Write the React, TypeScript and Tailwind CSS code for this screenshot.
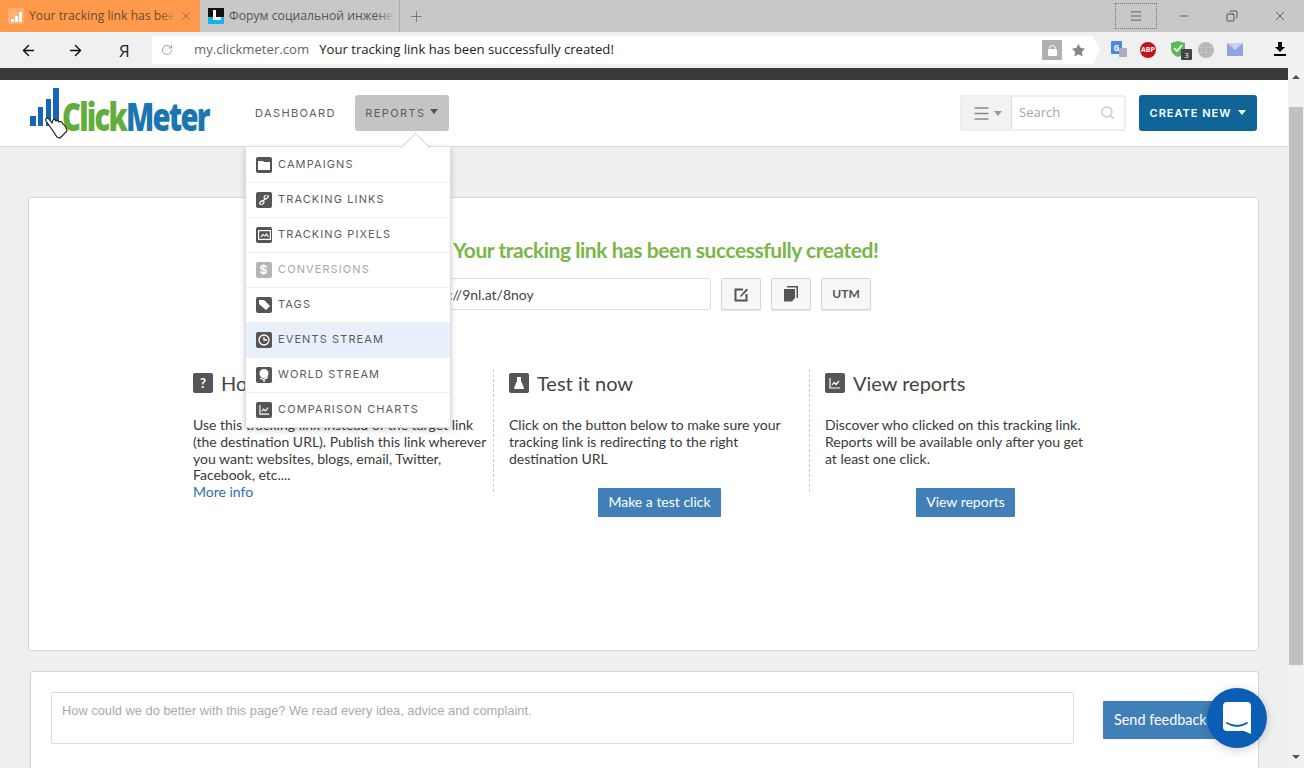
import { ArrowLeft, ArrowRight, Copy, Menu, Minus, Plus, RotateCw, Search, Star, X } from 'lucide-react';
import type { ReactNode } from 'react';

const sans = "font-['Open_Sans',sans-serif]";
const body = "font-['Lato','Open_Sans',sans-serif]";
const caps = "font-['Inter','Open_Sans',sans-serif]";

function IconBox({ children, size = 'w-4 h-4', faded = false }: { children: ReactNode; size?: string; faded?: boolean }) {
  return (
    <span
      className={`${size} ${faded ? 'bg-[#b5b5b5]' : 'bg-[#555555]'} rounded-[2px] flex items-center justify-center shrink-0 text-white`}
    >
      {children}
    </span>
  );
}

function ChartGlyph({ size = 12 }: { size?: number }) {
  return (
    <svg width={size} height={size} viewBox="0 0 12 12" fill="none" stroke="white" strokeWidth="1.2">
      <path d="M1 1 V11 H11" />
      <path d="M3 8 L5 5.5 L7 7.5 L10 4" />
    </svg>
  );
}

const menuItems: { label: string; icon: ReactNode; faded?: boolean; active?: boolean }[] = [
  {
    label: 'Campaigns',
    icon: (
      <svg width="12" height="10" viewBox="0 0 12 10">
        <path d="M0 1 H5 L6 2 H12 V10 H0 Z" fill="white" />
      </svg>
    ),
  },
  {
    label: 'Tracking links',
    icon: (
      <svg width="10" height="10" viewBox="0 0 10 10" fill="none" stroke="white" strokeWidth="1.2">
        <rect x="5" y="0.5" width="4.5" height="3" rx="1.4" transform="rotate(-45 7 2)" />
        <rect x="0.5" y="6" width="4.5" height="3" rx="1.4" transform="rotate(-45 3 7.5)" />
        <path d="M3.5 6.5 L6.5 3.5" />
      </svg>
    ),
  },
  {
    label: 'Tracking pixels',
    icon: (
      <svg width="13" height="10" viewBox="0 0 13 10" fill="none" stroke="white" strokeWidth="1.2">
        <rect x="0.6" y="0.6" width="11.8" height="8.8" />
        <path d="M3 7 L5 4.5 L7 6 L8.5 4 L10.5 7" />
      </svg>
    ),
  },
  { label: 'Conversions', icon: <span className="text-[12px] font-bold leading-none">$</span>, faded: true },
  {
    label: 'Tags',
    icon: (
      <svg width="11" height="11" viewBox="0 0 11 11">
        <path d="M0 1 H5 L11 7 L7 11 L0 5 Z" fill="white" />
      </svg>
    ),
  },
  {
    label: 'Events stream',
    icon: (
      <svg width="12" height="12" viewBox="0 0 12 12" fill="none" stroke="white" strokeWidth="1.3">
        <circle cx="6" cy="6" r="5" />
        <path d="M6 3 V6 H9" />
      </svg>
    ),
    active: true,
  },
  {
    label: 'World stream',
    icon: (
      <svg width="12" height="14" viewBox="0 0 12 14">
        <circle cx="6" cy="5.5" r="4.5" fill="white" />
        <path d="M2 10 Q6 13 10 9" stroke="white" strokeWidth="1.2" fill="none" />
        <path d="M6 11.5 V14" stroke="white" strokeWidth="1.5" />
      </svg>
    ),
  },
  { label: 'Comparison charts', icon: <ChartGlyph size={11} /> },
];

function TabBar() {
  return (
    <div className={`h-8 bg-[#c8c8c8] flex items-stretch text-[12.2px] ${sans}`}>
      <div className="w-[200px] bg-[#ff9a4d] flex items-center pl-2 pr-[18px] gap-[5px] text-[#6b4a2c] relative">
        <span className="w-4 h-4 bg-[#ffb070] rounded-[2px] flex items-end justify-center gap-px pb-[2px] shrink-0">
          <span className="w-[3px] h-[3px] bg-white" />
          <span className="w-[3px] h-[6px] bg-white" />
          <span className="w-[3px] h-[10px] bg-white" />
        </span>
        <span className="whitespace-nowrap">Your tracking link has bee</span>
        <span className="absolute left-[160px] top-0 w-4 h-full bg-linear-to-r from-transparent to-[#ff9a4d]" />
        <X size={14} strokeWidth={1.2} className="absolute right-[7px] top-[9px] text-[#7a5a3c]" />
      </div>
      <div className="w-[200px] border-r border-[#aaaaaa] flex items-center pl-[8px] gap-[5px] text-[#555555] relative">
        <svg width="16" height="16" viewBox="0 0 16 16" className="shrink-0">
          <rect width="16" height="16" fill="#10b5ea" />
          <rect width="16" height="9" fill="#111111" />
          <path d="M5 2 H8 V9 H13 V12 H5 Z" fill="white" />
        </svg>
        <span className="whitespace-nowrap">Форум социальной инжене</span>
        <span className="absolute left-[178px] top-0 w-4 h-full bg-linear-to-r from-transparent to-[#c8c8c8]" />
      </div>
      <div className="w-8 flex items-center justify-center text-[#666666]">
        <Plus size={17} strokeWidth={1.1} />
      </div>
      <div className="flex-1" />
      <div className="flex items-center text-[#333333]">
        <div className="w-[42px] h-[26px] mr-[3px] border border-dotted border-[#777777] flex items-center justify-center">
          <Menu size={14} strokeWidth={1.2} />
        </div>
        <div className="w-[48px] flex justify-center">
          <Minus size={14} strokeWidth={1.2} />
        </div>
        <div className="w-[48px] flex justify-center">
          <Copy size={12} strokeWidth={1.5} className="scale-x-[-1]" />
        </div>
        <div className="w-[48px] flex justify-center">
          <X size={16} strokeWidth={1} />
        </div>
      </div>
    </div>
  );
}

function Toolbar() {
  return (
    <div className={`h-9 bg-[#f0f0f0] flex items-center text-[13.15px] ${sans}`}>
      <div className="w-[152px] flex items-center pl-5 text-black">
        <ArrowLeft size={17} strokeWidth={1.8} />
        <ArrowRight size={17} strokeWidth={1.8} className="ml-[30px]" />
        <span className="ml-[35px] text-[17px] leading-none text-[#222222]">Я</span>
      </div>
      <div className="w-[941px] h-7 bg-white flex items-center pl-[9px] pr-[7px]">
        <RotateCw size={12} strokeWidth={1.6} className="text-[#888888]" />
        <span className="ml-[21px] text-[#666666]">my.clickmeter.com</span>
        <span className="ml-[10px] text-[#222222]">Your tracking link has been successfully created!</span>
        <span className="flex-1" />
        <span className="w-5 h-5 bg-[#b0b0b0] flex items-center justify-center">
          <span className="relative w-[9px] h-[7px] bg-white rounded-[1px] mt-[4px] before:absolute before:content-[''] before:left-[1px] before:-top-[4px] before:w-[7px] before:h-[6px] before:border before:border-white before:rounded-t-full" />
        </span>
        <Star size={15} fill="#888888" strokeWidth={0} className="ml-[9px] text-[#888888]" />
      </div>
      <div className="w-0 h-0 border-y-[14px] border-y-transparent border-l-[7px] border-l-white" />
      <div className="flex items-center relative flex-1 h-full">
        <span className="absolute left-[11px] top-[9px] w-[11px] h-[13px] bg-[#4a86e8] rounded-[1px] text-white text-[8px] font-bold flex items-center justify-center">
          G
        </span>
        <span className="absolute left-[19px] top-[16px] w-[8px] h-[9px] bg-[#a8b0b8] rounded-[1px]" />
        <span className="absolute left-[40px] top-[10px] w-4 h-4 rounded-full bg-[#c4101c] text-white text-[7px] font-bold flex items-center justify-center">
          ABP
        </span>
        <svg className="absolute left-[70px] top-[9px]" width="16" height="16" viewBox="0 0 16 16">
          <path d="M8 0 L15 2 V8 C15 12 11 15 8 16 C5 15 1 12 1 8 V2 Z" fill="#5cb85c" />
          <path d="M4 7 L7 10 L12 4" stroke="white" strokeWidth="1.6" fill="none" />
        </svg>
        <span className="absolute left-[81px] top-[17px] w-[11px] h-[11px] bg-[#444444] text-white text-[8px] flex items-center justify-center rounded-[1px]">
          3
        </span>
        <svg className="absolute left-[98px] top-[10px]" width="16" height="16" viewBox="0 0 16 16">
          <circle cx="8" cy="8" r="8" fill="#b4b4b4" />
          <path d="M0 5.5 H16 M0 10.5 H16 M8 0 V16 M4 1.5 Q2 8 4 14.5 M12 1.5 Q14 8 12 14.5" stroke="#c8c8c8" strokeWidth="0.7" fill="none" />
        </svg>
        <svg className="absolute left-[127px] top-[11px]" width="16" height="13" viewBox="0 0 16 13">
          <rect width="16" height="13" fill="#8fa4dc" />
          <path d="M0 0 L8 7 L16 0" fill="#c8d2ee" />
        </svg>
        <svg className="absolute left-[174px] top-[10px]" width="12" height="15" viewBox="0 0 12 15">
          <path d="M4 0 H8 V5 H11 L6 10 L1 5 H4 Z" fill="black" />
          <rect y="12" width="12" height="2" fill="black" />
        </svg>
      </div>
    </div>
  );
}

function Logo() {
  return (
    <div className="w-[180px] h-[50px] relative shrink-0">
      <svg width="29" height="38" viewBox="0 0 29 38" className="absolute left-0 top-0">
        <rect x="0" y="28" width="6" height="10" fill="#1565b8" />
        <rect x="8" y="19" width="5" height="19" fill="#1565b8" />
        <rect x="16" y="11" width="5" height="27" fill="#1565b8" />
        <rect x="23" y="0" width="6" height="38" fill="#1565b8" />
      </svg>
      <span className="absolute left-[32px] top-[8px] origin-left scale-x-[0.75] font-['Open_Sans',sans-serif] font-extrabold text-[39px] leading-[40px] tracking-[-2.4px] whitespace-nowrap">
        <span className="text-[#62ae3c]">Click</span>
        <span className="text-[#1a76b0]">Meter</span>
      </span>
      <svg width="23" height="23" viewBox="0 0 23 23" className="absolute left-[15px] top-[28px]">
        <path
          d="M6 12 L1 5 C0 3 2 1 4 3 L7 7 L8 4 C9 3 10 3 11 5 C12 4 13 4 14 6 C15 5 17 5 18 8 C20 9 22 13 22 15 L15 22 L12 21 Z"
          fill="white"
          stroke="#222222"
          strokeWidth="1.2"
        />
      </svg>
    </div>
  );
}

function ReportsMenu() {
  return (
    <div className="absolute left-[245px] top-[78px] w-[206px] bg-white border border-[#dddddd] shadow-[0_2px_6px_rgba(0,0,0,0.2)] z-10">
      <div className="absolute left-[159px] -top-[10px] w-[21px] h-[21px] bg-white border-l border-t border-[#d5d5d5] rotate-45" />
      {menuItems.map((item, i) => (
        <div
          key={item.label}
          className={`relative h-[35px] pb-px flex items-center gap-[6px] pl-[10px] uppercase text-[11px] tracking-[1.1px] border-t ${caps} ${
            i > 0 ? 'border-[#eeeeee]' : 'border-transparent'
          } ${item.active ? 'bg-[#e8f0fb]' : ''} ${item.faded ? 'text-[#a8a8a8]' : 'text-[#5c5c5c]'}`}
        >
          <IconBox faded={item.faded}>{item.icon}</IconBox>
          {item.label}
        </div>
      ))}
    </div>
  );
}

function Header() {
  return (
    <div className={`h-[67px] bg-white border-b border-[#dddddd] flex items-center pl-[30px] ${caps}`}>
      <Logo />
      <span className="ml-[45px] text-[11px] tracking-[1.4px] text-[#5c5c5c]">DASHBOARD</span>
      <div className="ml-[19px] w-[94px] h-9 bg-[#c4c4c4] rounded-[3px] flex items-center justify-center gap-[5px] text-[11px] tracking-[1.4px] text-[#5c5c5c]">
        REPORTS
        <span className="w-0 h-0 mb-[4px] border-x-[4px] border-x-transparent border-t-[5px] border-t-[#555555]" />
      </div>
      <div className="flex-1" />
      <div className="w-[166px] h-9 border-2 border-[#eeeeee] rounded-[3px] flex items-stretch">
        <div className="w-[50px] bg-[#f2f2f2] border-r border-[#dddddd] flex items-center justify-center gap-[3px]">
          <Menu size={19} strokeWidth={2} className="text-[#888888]" />
          <span className="w-0 h-0 border-x-[4px] border-x-transparent border-t-[5px] border-t-[#999999]" />
        </div>
        <div className={`flex-1 flex items-center justify-between pl-[7px] pr-[9px] text-[13px] text-[#a5a5a5] ${sans}`}>
          Search
          <Search size={15} strokeWidth={2.4} className="text-[#cccccc] mb-[2px]" />
        </div>
      </div>
      <div className="ml-[13px] mr-[31px] w-[118px] h-9 bg-[#0f6597] rounded-[3px] flex items-center justify-center gap-[7px] text-[11px] font-semibold tracking-[1px] text-white">
        CREATE NEW
        <span className="w-0 h-0 mb-[2px] border-x-[4px] border-x-transparent border-t-[5px] border-t-white" />
      </div>
    </div>
  );
}

function LinkRow() {
  const btn =
    'h-8 border border-[#d5d5d5] rounded-[2px] bg-[#f7f7f7] shadow-[0_1px_1px_rgba(0,0,0,0.1)] flex items-center justify-center text-[#555555]';
  return (
    <div className="flex items-center mt-[14px] pl-[391px]">
      <div className="w-[291px] h-8 border border-[#dddddd] rounded-[2px] flex items-center pl-[3px] text-[14px] text-[#444444]">
        http://9nl.at/8noy
      </div>
      <div className={`${btn} ml-[10px] w-10`}>
        <svg width="15" height="15" viewBox="0 0 15 15" fill="none">
          <path d="M9 2.5 H1.5 V13.5 H12.5 V7" stroke="#555555" strokeWidth="2" />
          <path d="M6 9 L12.5 1.5 L14 3 L7 10 Z" fill="#555555" />
        </svg>
      </div>
      <div className={`${btn} ml-[10px] w-10`}>
        <svg width="14" height="16" viewBox="0 0 14 16">
          <path d="M3 0 H14 V12 H12.5 V1.5 H3 Z" fill="#555555" />
          <path d="M0 3 H11 V12 L8 15.5 H0 Z" fill="#555555" />
        </svg>
      </div>
      <div className={`${btn} ml-[10px] w-[50px] text-[12px] font-bold`}>UTM</div>
    </div>
  );
}

function MainCard() {
  return (
    <div className={`ml-[28px] mt-[50px] w-[1231px] h-[454px] shrink-0 bg-white border border-[#d5d5d5] rounded-[3px] ${body}`}>
      <div className="pt-[38px] pl-[424px] text-[21px] leading-[28px] font-bold tracking-[-0.45px] text-[#7ab648]">
        Your tracking link has been successfully created!
      </div>
      <LinkRow />
      <div className="flex items-start mt-[59px] pl-[148px] text-[14px] leading-[16.8px] text-[#3a3a3a]">
        <div className="w-[316px] pl-[16px] pr-[4px]">
          <div className="flex items-center gap-[8px] h-[28px] text-[20px] text-[#444444]">
            <IconBox size="w-5 h-5">
              <span className="text-[13px] font-bold">?</span>
            </IconBox>
            How to use it
          </div>
          <p className="mt-[20px]">
            Use this tracking link instead of the target link (the destination URL). Publish this link wherever you
            want: websites, blogs, email, Twitter, Facebook, etc....
          </p>
          <span className="text-[#2f6ea8]">More info</span>
        </div>
        <div className="w-[316px] h-[123px] pl-[15px] border-l border-dashed border-[#cccccc]">
          <div className="flex items-center gap-[8px] h-[28px] text-[20px] text-[#444444]">
            <IconBox size="w-5 h-5">
              <svg width="12" height="14" viewBox="0 0 12 14">
                <path d="M4 1 H8 V5 L11 12 Q11 13 10 13 H2 Q1 13 1 12 L4 5 Z" fill="white" />
              </svg>
            </IconBox>
            Test it now
          </div>
          <p className="mt-[20px] w-[285px]">
            Click on the button below to make sure your tracking link is redirecting to the right destination URL
          </p>
          <div className="ml-[89px] mt-[21px] w-[123px] h-[29px] bg-[#417fb8] rounded-[1px] text-white flex items-center justify-center">
            Make a test click
          </div>
        </div>
        <div className="w-[300px] h-[123px] pl-[15px] border-l border-dashed border-[#cccccc]">
          <div className="flex items-center gap-[8px] h-[28px] text-[20px] text-[#444444]">
            <IconBox size="w-5 h-5">
              <ChartGlyph size={12} />
            </IconBox>
            View reports
          </div>
          <p className="mt-[20px] w-[270px]">
            Discover who clicked on this tracking link. Reports will be available only after you get at least one click.
          </p>
          <div className="ml-[91px] mt-[21px] w-[99px] h-[29px] bg-[#417fb8] rounded-[1px] text-white flex items-center justify-center">
            View reports
          </div>
        </div>
      </div>
    </div>
  );
}

function FeedbackCard() {
  return (
    <div className={`ml-[30px] mt-[20px] w-[1229px] flex-1 bg-white border border-b-0 border-[#d5d5d5] rounded-t-[3px] flex items-start pt-[20px] pl-[20px] ${body}`}>
      <div className="w-[1023px] h-[52px] border border-[#dddddd] rounded-[2px] px-[10px] pt-[10px] text-[12.85px] leading-[16px] text-[#aaaaaa] font-['Liberation_Sans',sans-serif]">
        How could we do better with this page? We read every idea, advice and complaint.
      </div>
      <div className="ml-[29px] mt-[9px] w-[120px] h-[38px] bg-[#417fb8] rounded-[1px] pl-[11px] flex items-center text-[14.4px] text-white">
        Send feedback
      </div>
    </div>
  );
}

function Scrollbar() {
  return (
    <div className="w-4 h-full bg-[#f1f1f1] flex flex-col items-center shrink-0">
      <span className="mt-[7px] w-0 h-0 border-x-[4px] border-x-transparent border-b-[4px] border-b-[#505050]" />
      <span className="mt-[28px] w-[14px] h-[558px] bg-[#c1c1c1]" />
      <span className="mt-[90px] w-0 h-0 border-x-[4px] border-x-transparent border-t-[4px] border-t-[#505050]" />
    </div>
  );
}

export default function App() {
  return (
    <div className="w-[1304px] h-[768px] overflow-hidden relative bg-[#efefef]">
      <TabBar />
      <Toolbar />
      <div className="flex h-[700px]">
        <div className="flex-1 flex flex-col relative overflow-hidden">
          <div className="h-3 bg-[#3a3a3a] shrink-0" />
          <Header />
          <ReportsMenu />
          <MainCard />
          <FeedbackCard />
        </div>
        <Scrollbar />
      </div>
      <div className="absolute left-[1207px] top-[688px] w-[60px] h-[60px] rounded-full bg-[#0a5eb5] shadow-[0_2px_10px_rgba(0,0,0,0.2)] flex items-center justify-center">
        <svg width="28" height="32" viewBox="0 0 28 32">
          <path d="M4 0 H24 Q28 0 28 4 V32 L21 29 H4 Q0 29 0 25 V4 Q0 0 4 0 Z" fill="white" />
          <path d="M4 21 Q14 27 24 21" stroke="#0a5eb5" strokeWidth="1.8" fill="none" strokeLinecap="round" />
        </svg>
      </div>
    </div>
  );
}
